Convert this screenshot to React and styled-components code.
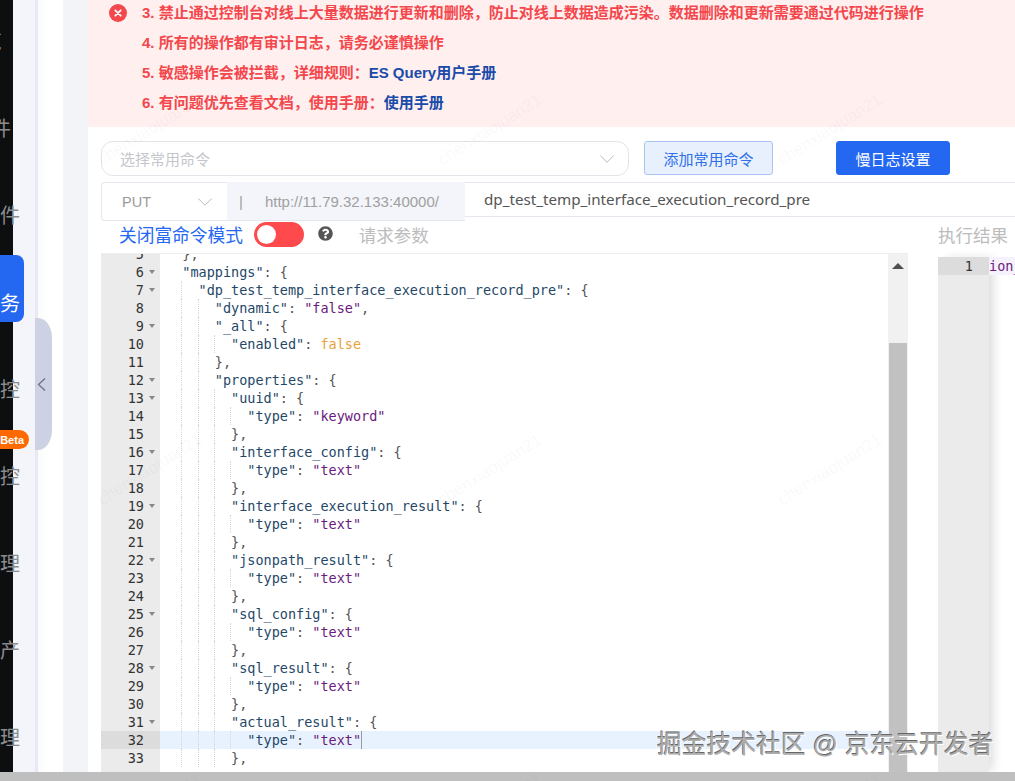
import React from "react";
import styled, { createGlobalStyle } from "styled-components";
import { FaQuestionCircle } from "react-icons/fa";
import { ChevronDown } from "lucide-react";

const UI_FONT = `"Liberation Sans", "Noto Sans CJK SC", sans-serif`;
const CODE_FONT = `"DejaVu Sans Mono", "Liberation Mono", monospace`;
const CHAR = 8.13;

const GlobalStyle = createGlobalStyle`
  html, body {
    margin: 0;
    padding: 0;
    height: 781px;
    overflow: hidden;
    background: #fff;
    font-family: ${UI_FONT};
  }
`;

const Screen = styled.div`
  position: relative;
  width: 1015px;
  height: 781px;
  overflow: hidden;
  display: flex;
  flex-direction: column;
`;

const Body = styled.div`
  flex: 1;
  min-height: 0;
  display: flex;
`;

const PageScrollbar = styled.div`
  height: 9px;
  background: #bfbfbf;
`;

const Rail = styled.nav`
  position: relative;
  z-index: 2;
  flex: 0 0 13px;
  width: 13px;
  background: #0d0e10;
`;

const NavList = styled.div`
  margin-top: -2px;
`;

const NavItem = styled.div`
  width: ${(p) => (p.$active ? 24 : 20)}px;
  height: ${(p) => (p.$active ? 67 : 87)}px;
  margin: ${(p) => (p.$active ? "-4px 0 24px" : "0")};
  padding: ${(p) => (p.$active ? "36px 4px 0 0" : `0 ${p.$shift || 0}px 0 0`)};
  box-sizing: border-box;
  display: flex;
  align-items: ${(p) => (p.$active ? "flex-start" : "center")};
  justify-content: flex-end;
  overflow: hidden;
  white-space: nowrap;
  font-size: 20px;
  line-height: 26px;
  color: ${(p) => (p.$active ? "#fff" : "#8c8c8c")};
  background: ${(p) => (p.$active ? "#2468f2" : "transparent")};
  border-radius: ${(p) => (p.$active ? "0 8px 8px 0" : "0")};
`;

const Strip = styled.div`
  flex: 0 0 22px;
  background: #f3f5fa;
`;

const StripEdge = styled.div`
  flex: 0 0 3px;
  background: #e8eaf1;
`;

const Gutterless = styled.div`
  flex: 0 0 25px;
  background: linear-gradient(90deg, #fafbfc, #fff 40%);
`;

const Band = styled.div`
  flex: 0 0 25px;
  background: #f3f4f8;
`;

const Handle = styled.div`
  position: absolute;
  z-index: 3;
  left: 35px;
  top: 318px;
  width: 17px;
  height: 132px;
  display: flex;
  align-items: center;
  background: #ccd2e3;
  border-radius: 0 14px 14px 0 / 0 20px 20px 0;
`;

const BetaBadge = styled.span`
  position: absolute;
  z-index: 3;
  left: 0;
  top: 430px;
  width: 29px;
  height: 19px;
  display: flex;
  align-items: center;
  justify-content: flex-end;
  padding-right: 5px;
  box-sizing: border-box;
  font-size: 11px;
  font-weight: 700;
  color: #fff;
  background: #ff6a00;
  border-radius: 0 10px 10px 0;
`;

const Main = styled.main`
  flex: 1;
  min-width: 0;
  display: flex;
  flex-direction: column;
`;

const Alert = styled.section`
  flex: 0 0 127px;
  box-sizing: border-box;
  display: flex;
  padding-left: 21px;
  background: #ffefef;
`;

const AlertIcon = styled.svg`
  flex: 0 0 18px;
  width: 18px;
  height: 18px;
  margin: 4px 15px 0 0;
`;

const AlertLines = styled.div`
  margin-top: -2px;
`;

const AlertLine = styled.div`
  height: 30px;
  line-height: 30px;
  font-size: 15px;
  font-weight: 700;
  white-space: nowrap;
  color: #f4474c;
`;

const AlertLink = styled.a`
  color: #1a4ba8;
`;

const CommandRow = styled.div`
  display: flex;
  align-items: flex-start;
  margin: 14px 0 6px 13px;
`;

const CommandSelect = styled.div`
  width: 528px;
  height: 35px;
  box-sizing: border-box;
  display: flex;
  align-items: center;
  justify-content: space-between;
  padding: 0 8px 0 18px;
  font-size: 15px;
  color: #c4c6cc;
  border: 1px solid #e2e4ea;
  border-radius: 12px;
`;

const Button = styled.button`
  height: 34px;
  width: ${(p) => p.$width}px;
  margin-left: ${(p) => p.$gap}px;
  padding: 0;
  font: 15px ${UI_FONT};
  border-radius: 3px;
  color: ${(p) => (p.$primary ? "#fff" : "#2f6fe8")};
  background: ${(p) => (p.$primary ? "#2468f2" : "#e8f0fe")};
  border: 1px solid ${(p) => (p.$primary ? "#2468f2" : "#a9c4f5")};
`;

const UrlRow = styled.div`
  display: flex;
  align-items: flex-start;
  margin-left: 13px;
`;

const MethodSelect = styled.div`
  width: 126px;
  height: 39px;
  box-sizing: border-box;
  display: flex;
  align-items: center;
  justify-content: space-between;
  padding: 0 9px 0 20px;
  font-size: 14.5px;
  color: #9a9a9a;
  border: 1px solid #e4e7ed;
  border-right: 0;
  border-radius: 4px 0 0 4px;
`;

const UrlAddon = styled.div`
  width: 238px;
  height: 39px;
  box-sizing: border-box;
  display: flex;
  align-items: center;
  padding-left: 12px;
  font-size: 15px;
  color: #a0a0a0;
  background: #f3f5fa;
  border-bottom: 1px solid #e4e7ed;
`;

const UrlBar = styled.span`
  margin-right: 22px;
`;

const IndexInput = styled.div`
  flex: 1;
  height: 35px;
  box-sizing: border-box;
  padding-left: 19px;
  line-height: 33px;
  font-family: "Noto Sans", sans-serif;
  font-size: 15.2px;
  color: #555;
  border-top: 1px solid #e4e7ed;
  border-bottom: 1px solid #e4e7ed;
`;

const ModeRow = styled.div`
  height: 34px;
  margin: -2px 0 0 31px;
  padding-bottom: 4px;
  box-sizing: border-box;
  display: flex;
  align-items: center;
`;

const ModeLabel = styled.span`
  font-size: 17.7px;
  color: #2468f2;
`;

const Toggle = styled.span`
  width: 50px;
  height: 25px;
  margin-left: 11px;
  box-sizing: border-box;
  padding: 3px;
  border-radius: 13px;
  background: #ff4a4d;
`;

const ToggleKnob = styled.span`
  display: block;
  width: 19px;
  height: 19px;
  border-radius: 50%;
  background: #fff;
`;

const HelpIcon = styled(FaQuestionCircle)`
  width: 15px;
  height: 15px;
  margin: -2px 0 0 14px;
  color: #555;
`;

const ParamsLabel = styled.span`
  font-size: 17.5px;
  color: #bcbcbc;
`;

const RequestLabel = styled(ParamsLabel)`
  margin-left: 26px;
`;

const ResultLabel = styled(ParamsLabel)`
  margin-left: auto;
  padding-right: 7px;
`;

const Panes = styled.div`
  flex: 1;
  min-height: 0;
  display: flex;
  margin-left: 13px;
`;

const Editor = styled.div`
  flex: 0 0 807px;
  position: relative;
  display: flex;
  overflow: hidden;
  border-top: 1px solid #eee;
  font-family: ${CODE_FONT};
  font-size: 13.5px;
  line-height: 18px;
`;

const LineNumbers = styled.div`
  flex: 0 0 59px;
  background: #ebebeb;
`;

const LineNumber = styled.div`
  height: 18px;
  margin-top: ${(p) => (p.$first ? "-9px" : "0")};
  display: flex;
  justify-content: flex-end;
  align-items: center;
  padding-right: 1px;
  color: #333;
  background: ${(p) => (p.$active ? "#dcdcdc" : "transparent")};
`;

const FoldMark = styled.span`
  width: 15px;
  height: 18px;
  display: flex;
  align-items: center;
  justify-content: center;
  &::after {
    content: "";
    display: ${(p) => (p.$open ? "block" : "none")};
    border: 3.5px solid transparent;
    border-top: 4px solid #888;
    border-bottom: 0;
  }
`;

const Code = styled.div`
  flex: 1;
  min-width: 0;
  overflow: hidden;
`;

const CodeLine = styled.div`
  height: 18px;
  margin-top: ${(p) => (p.$first ? "-9px" : "0")};
  padding-left: 6px;
  display: flex;
  white-space: pre;
  background: ${(p) => (p.$active ? "#e8f2fe" : "transparent")};
`;

const Indent = styled.span`
  flex: 0 0 ${CHAR * 2}px;
  box-sizing: border-box;
  height: 18px;
  border-right: ${(p) => (p.$guide ? "1px dotted #d6d6d6" : "0")};
`;

const tokenColors = {
  key: "#1f4868",
  value: "#6b1a7d",
  bool: "#e9a23b",
  punct: "#555",
};

const Token = styled.span`
  color: ${(p) => tokenColors[p.$kind]};
`;

const Caret = styled.span`
  width: 1px;
  height: 18px;
  background: #999;
`;

const EditorScrollbar = styled.div`
  flex: 0 0 20px;
  position: relative;
  background: #f1f1f1;
`;

const ScrollArrow = styled.span`
  position: absolute;
  left: 4px;
  top: 9px;
  border: 6px solid transparent;
  border-top: 0;
  border-bottom: 6px solid #505050;
`;

const ScrollThumb = styled.div`
  position: absolute;
  left: 1px;
  right: 1px;
  top: 89px;
  bottom: 0;
  background: #c1c1c1;
`;

const ResultPane = styled.div`
  flex: 1;
  margin: 4px 0 0 30px;
  display: flex;
  font-family: ${CODE_FONT};
  font-size: 13.5px;
  line-height: 18px;
`;

const ResultGutter = styled.div`
  flex: 0 0 51px;
  background: #ebebeb;
  box-shadow: 6px 0 10px -2px rgba(0, 0, 0, 0.14);
`;

const ResultNumber = styled.div`
  height: 18px;
  padding-right: 16px;
  text-align: right;
  color: #333;
  background: #dcdcdc;
`;

const ResultLine = styled.div`
  height: 18px;
  white-space: pre;
  color: #6b1a7d;
  background: #f6f2fb;
`;

const WatermarkLayer = styled.div`
  position: absolute;
  z-index: 1;
  left: -20px;
  top: -40px;
  display: grid;
  grid-template-columns: repeat(3, 340px);
  grid-auto-rows: 340px;
  pointer-events: none;
`;

const WatermarkText = styled.span`
  display: flex;
  align-items: center;
  justify-content: center;
  font-size: 17px;
  color: rgba(70, 70, 90, 0.045);
  transform: rotate(-32deg);
`;

const SiteMark = styled.div`
  position: absolute;
  z-index: 4;
  left: 657px;
  top: 729px;
  font-size: 24.8px;
  line-height: 32px;
  white-space: nowrap;
  color: #adadad;
  text-shadow: -0.6px -0.6px 0 #666, 1px 1px 0 #fff;
`;

const navItems = [
  { label: "概览", shift: 18 },
  { label: "组件", shift: 9 },
  { label: "组件" },
  { label: "服务", active: true },
  { label: "监控" },
  { label: "监控" },
  { label: "管理" },
  { label: "资产" },
  { label: "管理" },
];

const typeLine = (value = "text") => ({
  indent: 10,
  tokens: [
    ["key", '"type"'],
    ["punct", ": "],
    ["value", `"${value}"`],
  ],
});

const open = (indent, key) => ({
  indent,
  fold: true,
  tokens: [
    ["key", `"${key}"`],
    ["punct", ": {"],
  ],
});

const close = (indent) => ({ indent, tokens: [["punct", "},"]] });

const block = (key) => [open(8, key), typeLine(), close(8)];

const codeLines = [
  close(2),
  open(2, "mappings"),
  open(4, "dp_test_temp_interface_execution_record_pre"),
  {
    indent: 6,
    tokens: [
      ["key", '"dynamic"'],
      ["punct", ": "],
      ["value", '"false"'],
      ["punct", ","],
    ],
  },
  open(6, "_all"),
  {
    indent: 8,
    tokens: [
      ["key", '"enabled"'],
      ["punct", ": "],
      ["bool", "false"],
    ],
  },
  close(6),
  open(6, "properties"),
  open(8, "uuid"),
  typeLine("keyword"),
  close(8),
  ...block("interface_config"),
  ...block("interface_execution_result"),
  ...block("jsonpath_result"),
  ...block("sql_config"),
  ...block("sql_result"),
  open(8, "actual_result"),
  { ...typeLine(), active: true },
  close(8),
];

const FIRST_LINE = 5;

function CloseCircle() {
  return (
    <AlertIcon viewBox="0 0 18 18">
      <circle cx="9" cy="9" r="9" fill="#f4474c" />
      <path d="M6.3 6.3l5.4 5.4M11.7 6.3l-5.4 5.4" stroke="#fff" strokeWidth="1.8" strokeLinecap="round" />
    </AlertIcon>
  );
}

function WatermarkTiles() {
  return (
    <WatermarkLayer>
      {Array.from({ length: 9 }, (_, i) => (
        <WatermarkText key={i}>chenxiaojuan21</WatermarkText>
      ))}
    </WatermarkLayer>
  );
}

export default function App() {
  return (
    <Screen>
      <GlobalStyle />
      <Body>
        <Rail>
          <NavList>
            {navItems.map((item, i) => (
              <NavItem key={i} $active={item.active} $shift={item.shift}>
                {item.label}
              </NavItem>
            ))}
          </NavList>
        </Rail>
        <Strip />
        <StripEdge />
        <Gutterless />
        <Band />
        <Main>
          <Alert>
            <CloseCircle />
            <AlertLines>
              <AlertLine>3. 禁止通过控制台对线上大量数据进行更新和删除，防止对线上数据造成污染。数据删除和更新需要通过代码进行操作</AlertLine>
              <AlertLine>4. 所有的操作都有审计日志，请务必谨慎操作</AlertLine>
              <AlertLine>
                5. 敏感操作会被拦截，详细规则：<AlertLink>ES Query用户手册</AlertLink>
              </AlertLine>
              <AlertLine>
                6. 有问题优先查看文档，使用手册：<AlertLink>使用手册</AlertLink>
              </AlertLine>
            </AlertLines>
          </Alert>
          <CommandRow>
            <CommandSelect>
              选择常用命令
              <ChevronDown size={26} strokeWidth={0.9} color="#b5b8bf" />
            </CommandSelect>
            <Button $width={129} $gap={15}>添加常用命令</Button>
            <Button $width={114} $gap={63} $primary>慢日志设置</Button>
          </CommandRow>
          <UrlRow>
            <MethodSelect>
              PUT
              <ChevronDown size={26} strokeWidth={0.9} color="#b5b8bf" />
            </MethodSelect>
            <UrlAddon>
              <UrlBar>|</UrlBar>
              http://11.79.32.133:40000/
            </UrlAddon>
            <IndexInput>dp_test_temp_interface_execution_record_pre</IndexInput>
          </UrlRow>
          <ModeRow>
            <ModeLabel>关闭富命令模式</ModeLabel>
            <Toggle>
              <ToggleKnob />
            </Toggle>
            <HelpIcon />
            <RequestLabel>请求参数</RequestLabel>
            <ResultLabel>执行结果</ResultLabel>
          </ModeRow>
          <Panes>
            <Editor>
              <LineNumbers>
                {codeLines.map((line, i) => (
                  <LineNumber key={i} $first={i === 0} $active={line.active}>
                    {FIRST_LINE + i}
                    <FoldMark $open={line.fold} />
                  </LineNumber>
                ))}
              </LineNumbers>
              <Code>
                {codeLines.map((line, i) => {
                  const level = line.indent / 2;
                  return (
                    <CodeLine key={i} $first={i === 0} $active={line.active}>
                      {Array.from({ length: level }, (_, n) => (
                        <Indent key={n} $guide={n < level - 1} />
                      ))}
                      {line.tokens.map(([kind, text], t) => (
                        <Token key={t} $kind={kind}>{text}</Token>
                      ))}
                      {line.active && <Caret />}
                    </CodeLine>
                  );
                })}
              </Code>
              <EditorScrollbar>
                <ScrollArrow />
                <ScrollThumb />
              </EditorScrollbar>
            </Editor>
            <ResultPane>
              <ResultGutter>
                <ResultNumber>1</ResultNumber>
              </ResultGutter>
              <Code>
                <ResultLine>ion_</ResultLine>
              </Code>
            </ResultPane>
          </Panes>
        </Main>
      </Body>
      <PageScrollbar />
      <Handle>
        <svg width="11" height="15" viewBox="0 0 11 15" fill="none">
          <path d="M10 1.5L3.5 7.5 10 13.5" stroke="#6b7080" strokeWidth="1.2" />
        </svg>
      </Handle>
      <BetaBadge>Beta</BetaBadge>
      <WatermarkTiles />
      <SiteMark>掘金技术社区 @ 京东云开发者</SiteMark>
    </Screen>
  );
}
